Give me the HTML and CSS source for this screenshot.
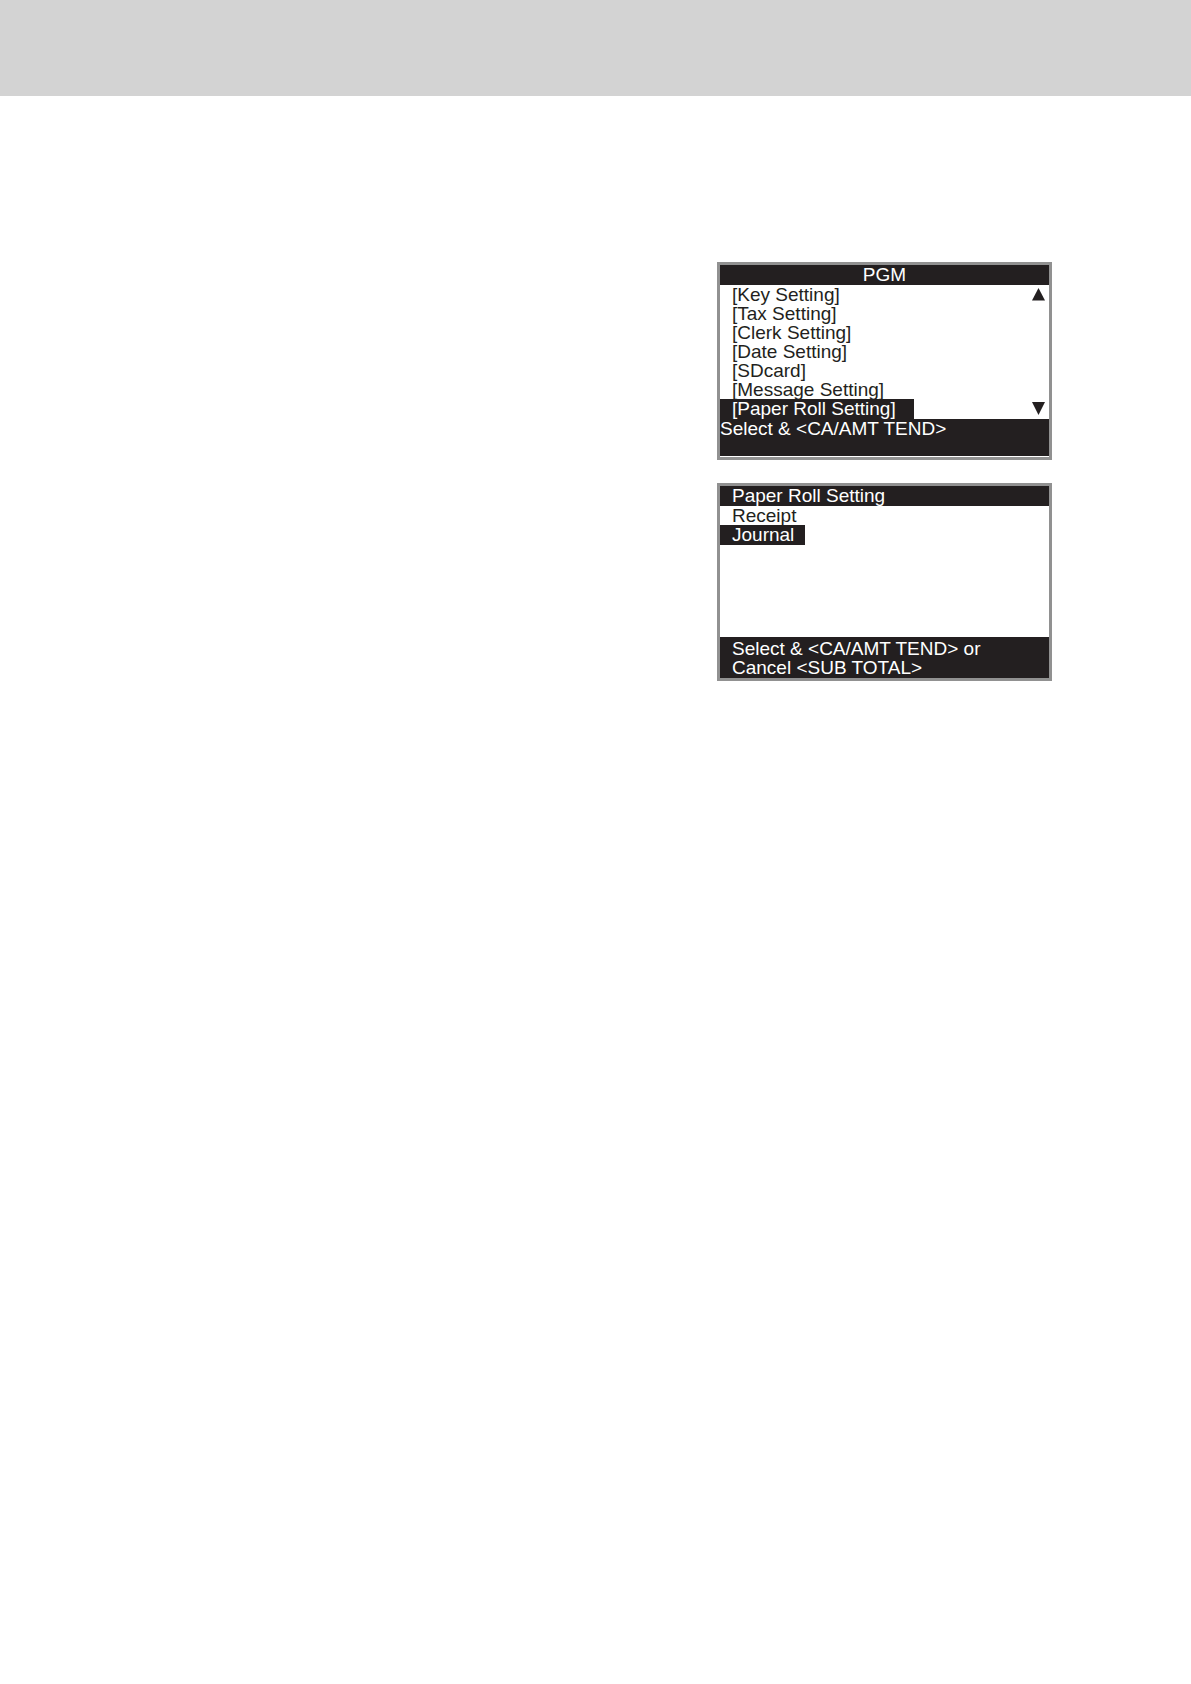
FILE: index.html
```html
<!DOCTYPE html>
<html lang="en">
<head>
    <meta charset="UTF-8">
    <meta name="viewport" content="width=device-width, initial-scale=1.0">
    <title>Paper Roll Setting</title>
    <link rel="stylesheet" href="styles.css">
</head>
<body>
    <header class="page-header"></header>

    <main class="screens">
        <section class="screen">
            <h2 class="screen-title centered">PGM</h2>
            <div class="screen-body">
                <ul class="menu wide">
                    <li>[Key Setting]</li>
                    <li>[Tax Setting]</li>
                    <li>[Clerk Setting]</li>
                    <li>[Date Setting]</li>
                    <li>[SDcard]</li>
                    <li>[Message Setting]</li>
                    <li class="selected">[Paper Roll Setting]</li>
                </ul>
                <div class="scroll">
                    <button type="button" class="arrow" aria-label="Scroll up">
                        <svg viewBox="0 0 13 13"><path d="M6.5 0 L13 12.5 H0 Z"/></svg>
                    </button>
                    <button type="button" class="arrow" aria-label="Scroll down">
                        <svg viewBox="0 0 13 13"><path d="M0 0 H13 L6.5 13 Z"/></svg>
                    </button>
                </div>
            </div>
            <p class="screen-footer flush">Select &amp; &lt;CA/AMT TEND&gt;</p>
        </section>

        <section class="screen">
            <h2 class="screen-title">Paper Roll Setting</h2>
            <div class="screen-body">
                <ul class="menu">
                    <li>Receipt</li>
                    <li class="selected">Journal</li>
                </ul>
            </div>
            <p class="screen-footer">Select &amp; &lt;CA/AMT TEND&gt; or<br>Cancel &lt;SUB TOTAL&gt;</p>
        </section>
    </main>
</body>
</html>
```
FILE: styles.css
```css
* {
    box-sizing: border-box;
}
body {
    margin: 0;
    background-color: #fff;
    color: #231f20;
    font-family: Arial, "Liberation Sans", sans-serif;
    font-size: 19px;
    line-height: 19px;
}
.page-header {
    height: 96px;
    background-color: #d3d3d3;
}
.screens {
    display: flex;
    flex-direction: column;
    align-items: flex-end;
    gap: 23px;
    padding: 166px 139px 40px 20px;
}
.screen {
    display: flex;
    flex-direction: column;
    width: 100%;
    max-width: 335px;
    min-height: 198px;
    border: 3px solid #919191;
}
.screen-title {
    margin: 0;
    padding: 0 12px 1px;
    background-color: #231f20;
    color: #fff;
    font-size: 19px;
    font-weight: normal;
}
.centered {
    text-align: center;
}
.screen-body {
    display: flex;
    flex: 1;
    justify-content: space-between;
}
.menu {
    display: flex;
    flex-direction: column;
    align-items: flex-start;
    margin: 0;
    padding: 0;
    list-style: none;
}
.menu li {
    padding: 0 11px 0 12px;
}
.menu.wide li {
    padding-right: 18px;
}
.menu .selected {
    padding-bottom: 1px;
    background-color: #231f20;
    color: #fff;
}
.scroll {
    display: flex;
    flex-direction: column;
    justify-content: space-between;
    padding: 3px 4px 4px;
}
.arrow {
    width: 13px;
    height: 13px;
    padding: 0;
    border: none;
    background: none;
    cursor: pointer;
}
.arrow svg {
    display: block;
    fill: #231f20;
}
.screen-footer {
    min-height: 41px;
    margin: 0;
    padding: 2px 12px 1px;
    background-color: #231f20;
    color: #fff;
}
.flush {
    min-height: 38px;
    padding: 0;
    border-bottom: 1px solid #fff;
}
```
